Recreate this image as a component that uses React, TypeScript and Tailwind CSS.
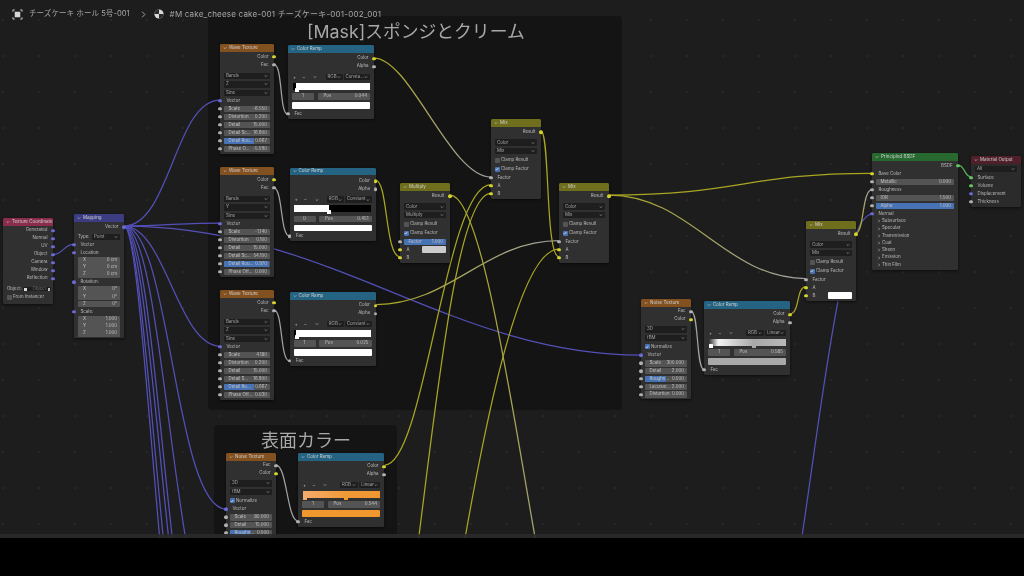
import type { ReactNode } from "react";
import clsx from "clsx";

const sockets = {
  y: "bg-[#d4d42c]",
  g: "bg-[#b0b0b0]",
  p: "bg-[#6a6ad4]",
  n: "bg-[#63c763]",
};
type Sock = keyof typeof sockets;

function Socket({ side, color }: { side: "l" | "r"; color: Sock }) {
  return (
    <span
      className={clsx(
        "absolute top-1/2 h-[3.4px] w-[3.4px] -translate-y-1/2 rounded-full",
        side === "l" ? "left-[-1.7px]" : "right-[-1.7px]",
        sockets[color],
      )}
    />
  );
}

function Chevron({ className = "" }: { className?: string }) {
  return (
    <svg viewBox="0 0 6 6" className={clsx("h-[4px] w-[4px] shrink-0", className)} fill="none" stroke="currentColor" strokeWidth="0.9">
      <path d="M1 2l2 2 2-2" />
    </svg>
  );
}

function Node({ className, head, title, children, body = "bg-[#303030]" }: { className: string; head: string; title: string; children: ReactNode; body?: string }) {
  return (
    <div className={clsx("absolute rounded-[1.5px] text-[4.4px] leading-none text-[#bdbdbd] shadow-[0_1px_3px_rgba(0,0,0,0.55)]", body, className)}>
      <div className={clsx("flex h-[7.5px] items-center gap-[2px] rounded-t-[1.5px] pl-[3px] text-[4.5px] text-[#d0d0d0]", head)}>
        <Chevron />
        <span>{title}</span>
      </div>
      {children}
    </div>
  );
}

function Out({ label, color }: { label: string; color: Sock }) {
  return (
    <div className="relative flex h-[8px] items-center justify-end pr-[5.5px]">
      <span>{label}</span>
      <Socket side="r" color={color} />
    </div>
  );
}

function In({ label, color, className = "" }: { label: string; color: Sock; className?: string }) {
  return (
    <div className={clsx("relative flex h-[8px] items-center pl-[6.5px]", className)}>
      <span>{label}</span>
      <Socket side="l" color={color} />
    </div>
  );
}

function Sel({ label, className = "" }: { label: string; className?: string }) {
  return (
    <div className={clsx("flex h-[6.5px] items-center justify-between rounded-[1px] bg-[#1e1e1e] px-[2px] text-[#a8a8a8]", className)}>
      <span>{label}</span>
      <Chevron />
    </div>
  );
}

function Num({ label, value, fill, sock = true, h = "h-[8px]", x = "px-[4px]" }: { label: string; value: string; fill?: number; sock?: boolean; h?: string; x?: string }) {
  return (
    <div className={clsx("relative flex items-center", h, x)}>
      <div className="relative flex h-[6.5px] flex-1 items-center justify-between overflow-hidden rounded-[1px] bg-[#545454] px-[3px] text-[#c4c4c4]">
        {fill ? <span className="absolute inset-y-0 left-0 bg-[#4772b3]" style={{ width: `${fill}%` }} /> : null}
        <span className="relative pl-[1.5px]">{label}</span>
        <span className="relative">{value}</span>
      </div>
      {sock ? <Socket side="l" color="g" /> : null}
    </div>
  );
}

function Check({ label, on, h = "h-[9px]" }: { label: string; on?: boolean; h?: string }) {
  return (
    <div className={clsx("flex items-center gap-[1.5px] pl-[3.5px]", h)}>
      <span className={clsx("flex h-[5px] w-[5px] items-center justify-center rounded-[1px]", on ? "bg-[#4772b3]" : "bg-[#545454]")}>
        {on ? (
          <svg viewBox="0 0 6 6" className="h-[4px] w-[4px]" fill="none" stroke="#fff" strokeWidth="1">
            <path d="M1 3.2l1.4 1.4L5 1.4" />
          </svg>
        ) : null}
      </span>
      <span>{label}</span>
    </div>
  );
}

function Wave({ className, mid, fields }: { className: string; mid: string; fields: [string, string, number?][] }) {
  return (
    <Node className={className} head="bg-[#83501f]" title="Wave Texture">
      <div className="pt-[1.4px]">
        <Out label="Color" color="y" />
        <Out label="Fac" color="g" />
      </div>
      <div className="mt-[3.8px] flex flex-col gap-[2px] px-[4px]">
        <Sel label="Bands" />
        <Sel label={mid} />
        <Sel label="Sine" />
      </div>
      <In label="Vector" color="p" className="mt-[0.8px]" />
      {fields.map(([label, value, fill]) => (
        <Num key={label} label={label} value={value} fill={fill} />
      ))}
      <div className="h-[1px]" />
    </Node>
  );
}

function Ramp({ className, mode, index, pos, swatch, children }: { className: string; mode: string; index: string; pos: string; swatch: string; children: ReactNode }) {
  return (
    <Node className={className} head="bg-[#246482]" title="Color Ramp">
      <div className="pt-[2.2px]">
        <Out label="Color" color="y" />
        <Out label="Alpha" color="g" />
      </div>
      <div className="mt-[3.2px] flex h-[6.5px] items-center gap-[1px] px-[4px]">
        <span className="flex w-[38px] items-center gap-[6px] pl-[1px] text-[5px] text-[#bdbdbd]">
          <span>+</span>
          <span>−</span>
          <Chevron className="ml-[1.5px]" />
        </span>
        <Sel label="RGB" className="ml-[3px] w-[20px]" />
        <Sel label={mode} className="flex-1" />
      </div>
      <div className="relative mx-[4.5px] mt-[2.6px] h-[6.7px]">{children}</div>
      <div className="mt-[3.7px] flex h-[6.5px] gap-[3.5px] px-[4px]">
        <div className="flex w-[22px] items-center justify-center rounded-[1px] bg-[#545454] text-[#c4c4c4]">{index}</div>
        <div className="flex flex-1 items-center justify-between rounded-[1px] bg-[#545454] px-[3px] text-[#c4c4c4]">
          <span className="pl-[3px]">Pos</span>
          <span>{pos}</span>
        </div>
      </div>
      <div className={clsx("mx-[4px] mt-[2.4px] h-[6.6px] rounded-[1px]", swatch)} />
      <In label="Fac" color="g" className="mt-[1px]" />
      <div className="h-[0.7px]" />
    </Node>
  );
}

function Handle({ className, tone = "bg-white" }: { className: string; tone?: string }) {
  return <span className={clsx("absolute bottom-[-2px] h-[4px] w-[4px] rounded-[0.5px]", tone, className)} />;
}

function Mix({ className, title, mode, a, b, factor }: { className: string; title: string; mode: string; a?: string; b?: string; factor?: boolean }) {
  const swatch = (tone?: string) =>
    tone ? <span className={clsx("absolute right-[4px] top-[0.7px] h-[6.4px] w-[24px] rounded-[1px]", tone)} /> : null;
  return (
    <Node className={className} head="bg-[#6e6e1d]" title={title}>
      <div className="pt-[1.8px]">
        <Out label="Result" color="y" />
      </div>
      <div className="mt-[3.2px] flex flex-col gap-[2px] px-[4px]">
        <Sel label="Color" />
        <Sel label={mode} />
      </div>
      <div className="mt-[1.3px]">
        <Check label="Clamp Result" />
        <Check label="Clamp Factor" on />
      </div>
      {factor ? <Num label="Factor" value="1.000" fill={100} /> : <In label="Factor" color="g" />}
      <div className="relative">
        <In label="A" color="y" />
        {swatch(a)}
      </div>
      <div className="relative">
        <In label="B" color="y" />
        {swatch(b)}
      </div>
      <div className="h-[1.2px]" />
    </Node>
  );
}

function Noise({ className, fields, cut }: { className: string; fields: [string, string, number?][]; cut?: boolean }) {
  return (
    <Node className={className} head="bg-[#83501f]" title="Noise Texture">
      <div className="pt-[1.2px]">
        <Out label="Fac" color="g" />
        <Out label="Color" color="y" />
      </div>
      <div className="mt-[2.4px] flex flex-col gap-[2.4px] px-[4px]">
        <Sel label="3D" />
        <Sel label="fBM" />
      </div>
      <Check label="Normalize" on h="h-[10.5px]" />
      <In label="Vector" color="p" className="-mt-[0.5px]" />
      {fields.map(([label, value, fill]) => (
        <Num key={label} label={label} value={value} fill={fill} h="h-[7.8px]" />
      ))}
      {cut ? <div className="h-[4px]" /> : <div className="h-[0.4px]" />}
    </Node>
  );
}

function SubPanel({ label }: { label: string }) {
  return (
    <div className="flex h-[7.25px] items-center gap-[1.5px] pl-[4.5px]">
      <Chevron className="-rotate-90" />
      <span>{label}</span>
    </div>
  );
}

function AxisGroup({ rows }: { rows: [string, string][] }) {
  return (
    <div className="mx-[4px] flex flex-col gap-[0.5px] overflow-hidden rounded-[1px]">
      {rows.map(([axis, value]) => (
        <div key={axis} className="flex h-[6.6px] items-center justify-between bg-[#545454] px-[3px] text-[#c4c4c4]">
          <span className="pl-[2px]">{axis}</span>
          <span>{value}</span>
        </div>
      ))}
    </div>
  );
}

const YEL = "#a9a622";
const PUR = "#5350b8";
const GRY = "#a2a2a2";
const GRN = "#58b058";

type Pt = [number, number];
const links: { id: string; pts: [Pt, Pt, Pt, Pt]; from: string; to?: string }[] = [
  // mapping fan
  { id: "m1", pts: [[124, 226], [170, 226], [175, 100], [220, 100]], from: PUR },
  { id: "m2", pts: [[124, 226], [160, 226], [185, 223], [220, 223]], from: PUR },
  { id: "m3", pts: [[124, 226], [165, 226], [178, 346], [220, 346]], from: PUR },
  { id: "m4", pts: [[124, 226], [170, 226], [175, 509], [226, 509]], from: PUR },
  { id: "m5", pts: [[124, 226], [165, 226], [175, 650], [225, 650]], from: PUR },
  { id: "m6", pts: [[124, 226], [160, 226], [170, 760], [225, 760]], from: PUR },
  { id: "m7", pts: [[124, 226], [155, 226], [175, 840], [230, 840]], from: PUR },
  { id: "m8", pts: [[124, 226], [150, 226], [170, 860], [225, 860]], from: PUR },
  { id: "m9", pts: [[124, 226], [148, 226], [165, 880], [225, 880]], from: PUR },
  { id: "m10", pts: [[124, 226], [330, 226], [450, 355], [641, 355]], from: PUR },
  { id: "t1", pts: [[53, 254.5], [64, 254.5], [63, 244.3], [74, 244.3]], from: PUR },
  { id: "n1", pts: [[760, 700], [800, 700], [825, 214], [872, 214]], from: PUR },
  // fac wires
  { id: "f1", pts: [[274, 64.5], [283, 64.5], [279, 114.3], [288, 114.3]], from: GRY },
  { id: "f2", pts: [[273.5, 187.5], [283, 187.5], [280, 236], [289.5, 236]], from: GRY },
  { id: "f3", pts: [[274, 310], [283, 310], [280, 361], [289.5, 361]], from: GRY },
  { id: "f4", pts: [[276, 465], [287, 465], [287, 521], [298, 521]], from: GRY },
  { id: "f5", pts: [[691, 311], [699, 311], [696, 369.5], [704, 369.5]], from: GRY },
  // colour wires
  { id: "c1", pts: [[374, 58], [410, 58], [450, 177], [491, 177]], from: YEL, to: GRY },
  { id: "c2", pts: [[375.5, 180], [388, 180], [385, 256.7], [400, 256.7]], from: YEL },
  { id: "c3", pts: [[376, 304.5], [450, 304.5], [485, 240.7], [559, 240.7]], from: YEL, to: GRY },
  { id: "c4", pts: [[384.7, 465], [425, 465], [445, 184.7], [491, 184.7]], from: YEL },
  { id: "c5", pts: [[370, 760], [415, 760], [435, 193.3], [491, 193.3]], from: YEL },
  { id: "c6", pts: [[420, 760], [440, 760], [490, 249], [559, 249]], from: YEL },
  { id: "c7", pts: [[450, 195], [500, 195], [545, 720], [585, 720]], from: YEL, to: GRY },
  { id: "c8", pts: [[541, 131.3], [550, 131.3], [545, 256.7], [559, 256.7]], from: YEL },
  { id: "c9", pts: [[609, 195], [740, 195], [745, 173.3], [872, 173.3]], from: YEL },
  { id: "c10", pts: [[609, 195], [690, 195], [725, 278.5], [806, 278.5]], from: YEL, to: GRY },
  { id: "c11", pts: [[790, 313.7], [800, 313.7], [796, 286.5], [806, 286.5]], from: YEL },
  { id: "c12", pts: [[856, 233], [864, 233], [862, 189.5], [872, 189.5]], from: YEL, to: GRY },
  { id: "c13", pts: [[958, 165], [965, 165], [964, 176.7], [971, 176.7]], from: GRN },
];

function Wires() {
  return (
    <svg className="absolute inset-0 h-[538px] w-[1024px]" viewBox="0 0 1024 538" fill="none">
      <defs>
        {links
          .filter((l) => l.to)
          .map((l) => (
            <linearGradient key={l.id} id={l.id} gradientUnits="userSpaceOnUse" x1={l.pts[0][0]} y1={l.pts[0][1]} x2={l.pts[3][0]} y2={l.pts[3][1]}>
              <stop offset="0" stopColor={l.from} />
              <stop offset="1" stopColor={l.to} />
            </linearGradient>
          ))}
      </defs>
      {links.map((l) => {
        const [a, b, c, d] = l.pts;
        return (
          <path
            key={l.id}
            d={`M${a[0]} ${a[1]}C${b[0]} ${b[1]} ${c[0]} ${c[1]} ${d[0]} ${d[1]}`}
            stroke={l.to ? `url(#${l.id})` : l.from}
            strokeWidth="1.25"
          />
        );
      })}
    </svg>
  );
}

function Breadcrumb() {
  return (
    <div className="absolute left-[12px] top-[8px] flex h-[12px] items-center text-[#a6a6a6]">
      <svg viewBox="0 0 12 12" className="h-[11px] w-[11px]" fill="none" stroke="#cfcfcf" strokeWidth="1">
        <path d="M1 3V1h2M9 1h2v2M11 9v2H9M3 11H1V9" />
        <rect x="3" y="3" width="6" height="6" fill="#d8d8d8" stroke="none" />
      </svg>
      <span className="ml-[6px] text-[7.6px]">チーズケーキ ホール 5号-001</span>
      <svg viewBox="0 0 6 10" className="ml-[11px] h-[7px] w-[5px]" fill="none" stroke="#bdbdbd" strokeWidth="1.2">
        <path d="M1 1l4 4-4 4" />
      </svg>
      <svg viewBox="0 0 10 10" className="ml-[8px] h-[10px] w-[10px]">
        <circle cx="5" cy="5" r="4.6" fill="#d8d8d8" />
        <path d="M5 .4A4.6 4.6 0 0 0 .4 5H5zM5 5v4.6A4.6 4.6 0 0 0 9.6 5z" fill="#2a2a2a" />
      </svg>
      <span className="ml-[6px] text-[8px] tracking-[0.2px]">#M cake_cheese cake-001 チーズケーキ-001-002_001</span>
    </div>
  );
}

export default function App() {
  return (
    <div className="flex h-[576px] w-[1024px] flex-col overflow-hidden bg-black font-['Inter','Noto_Sans_CJK_JP',sans-serif]">
      <div className="relative h-[538px] w-full shrink-0 overflow-hidden bg-[#1d1d1d] bg-[radial-gradient(circle,#2b2b2b_0.6px,transparent_1px)] bg-[size:36px_36px] bg-[position:-15px_2px] blur-[0.35px]">
        {/* frames */}
        <div className="absolute left-[208px] top-[16px] h-[394px] w-[414px] rounded-[4px] bg-[#141414]">
          <p className="mt-[7px] pl-[99px] text-[17.8px] leading-[18px] text-[#a8a8a8]">[Mask]スポンジとクリーム</p>
        </div>
        <div className="absolute left-[214px] top-[425px] h-[113px] w-[183px] rounded-t-[4px] bg-[#141414]">
          <p className="mt-[7px] pl-[47px] text-[18px] leading-[18px] text-[#a8a8a8]">表面カラー</p>
        </div>

        <Wires />
        <Breadcrumb />

        <Node className="left-[3px] top-[218px] w-[50px]" head="bg-[#8a2c4b]" title="Texture Coordinate">
          <div className="pt-[1px]">
            {["Generated", "Normal", "UV", "Object", "Camera", "Window", "Reflection"].map((s) => (
              <Out key={s} label={s} color="p" />
            ))}
          </div>
          <div className="mt-[3.5px] flex h-[6.5px] items-center gap-[1px] px-[3px]">
            <span className="w-[19px] pl-[1px]">Object:</span>
            <span className="flex flex-1 items-center gap-[2px] rounded-[1px] bg-[#1e1e1e] px-[1px] text-[#6c6c6c]">
              <span className="h-[3.5px] w-[3.5px] bg-[#d8d8d8]" />
              <span className="flex-1 pl-[3px]">Object</span>
              <span className="h-[3px] w-[2px] bg-[#bdbdbd]" />
            </span>
          </div>
          <Check label="From Instancer" />
          <div className="h-[2.5px]" />
        </Node>

        <Node className="left-[74px] top-[214px] w-[50px]" head="bg-[#3c3c83]" title="Mapping">
          <div className="pt-[1.8px]">
            <Out label="Vector" color="p" />
          </div>
          <div className="mt-[2.5px] flex h-[6.5px] items-center px-[4px]">
            <span className="w-[14px]">Type:</span>
            <Sel label="Point" className="flex-1" />
          </div>
          <In label="Vector" color="p" className="mt-[0.8px]" />
          <In label="Location:" color="p" />
          <AxisGroup rows={[["X", "0 cm"], ["Y", "0 cm"], ["Z", "0 cm"]]} />
          <In label="Rotation:" color="p" className="mt-[0.5px]" />
          <AxisGroup rows={[["X", "0°"], ["Y", "0°"], ["Z", "0°"]]} />
          <In label="Scale:" color="p" className="mt-[0.8px]" />
          <AxisGroup rows={[["X", "1.000"], ["Y", "1.000"], ["Z", "1.000"]]} />
          <div className="h-[1.5px]" />
        </Node>

        <Wave
          className="left-[220px] top-[44px] w-[54px]"
          mid="Z"
          fields={[["Scale", "-6.550"], ["Distortion", "0.200"], ["Detail", "15.000"], ["Detail Sc...", "16.900"], ["Detail Rou...", "0.667", 66], ["Phase O...", "-5.590"]]}
        />
        <Wave
          className="left-[220px] top-[167px] w-[54px]"
          mid="Y"
          fields={[["Scale", "-1.140"], ["Distortion", "0.100"], ["Detail", "15.000"], ["Detail Sc...", "54.100"], ["Detail Rou...", "0.970", 97], ["Phase Off...", "0.000"]]}
        />
        <Wave
          className="left-[220px] top-[290px] w-[54px]"
          mid="Z"
          fields={[["Scale", "4.180"], ["Distortion", "0.200"], ["Detail", "15.000"], ["Detail S...", "16.900"], ["Detail Ro...", "0.667", 66], ["Phase Off...", "0.030"]]}
        />

        <Ramp className="left-[288px] top-[45px] w-[86px]" mode="Consta..." index="1" pos="0.044" swatch="bg-white">
          <div className="h-full bg-white" />
          <span className="absolute left-0 top-0 h-full w-[3px] bg-black" />
          <Handle className="left-[2.5px]" />
        </Ramp>
        <Ramp className="left-[289.5px] top-[167.5px] w-[86px]" mode="Constant" index="0" pos="0.451" swatch="bg-white">
          <div className="flex h-full">
            <div className="w-[45%] bg-white" />
            <div className="flex-1 bg-black" />
          </div>
          <Handle className="left-[43%]" />
        </Ramp>
        <Ramp className="left-[289.5px] top-[292px] w-[86px]" mode="Constant" index="1" pos="0.025" swatch="bg-white">
          <div className="h-full bg-white" />
          <span className="absolute left-0 top-0 h-full w-[2px] bg-black" />
          <Handle className="left-[1px]" />
        </Ramp>
        <Ramp className="left-[704px] top-[301px] w-[86px]" mode="Linear" index="1" pos="0.585" swatch="bg-[#a9a9a9]">
          <div className="h-full bg-[linear-gradient(90deg,#333,#f2f2f2_12%,#a8a8a8_58%,#b8b8b8)]" />
          <Handle className="left-0" />
          <Handle className="left-[57%]" tone="bg-[#a8a8a8]" />
        </Ramp>
        <Ramp className="left-[298px] top-[453px] w-[86px]" mode="Linear" index="1" pos="0.544" swatch="bg-[#f0982e]">
          <div className="h-full bg-[linear-gradient(90deg,#f3ac6e,#f09a36_55%,#ef9630)]" />
          <Handle className="left-0" tone="bg-[#f3ac6e]" />
          <Handle className="left-[54%]" tone="bg-[#f09a36]" />
        </Ramp>

        <Mix className="left-[400px] top-[183px] w-[50px]" title="Multiply" mode="Multiply" a="bg-[#cccccc]" factor />
        <Mix className="left-[491px] top-[119px] w-[50px]" title="Mix" mode="Mix" />
        <Mix className="left-[559px] top-[183px] w-[50px]" title="Mix" mode="Mix" />
        <Mix className="left-[806px] top-[221px] w-[50px]" title="Mix" mode="Mix" b="bg-white" />

        <Noise
          className="left-[641px] top-[299px] w-[50px]"
          fields={[["Scale", "300.000"], ["Detail", "2.000"], ["Roughn...", "0.500", 50], ["Lacunar...", "2.000"], ["Distortion", "0.000"]]}
        />
        <Noise
          className="left-[226px] top-[453px] w-[50px]"
          cut
          fields={[["Scale", "80.000"], ["Detail", "15.000"], ["Roughn...", "0.500", 50]]}
        />

        <Node className="left-[872px] top-[153px] w-[86px]" head="bg-[#28692f]" title="Principled BSDF">
          <div className="pt-[1.5px]">
            <Out label="BSDF" color="n" />
          </div>
          <In label="Base Color" color="y" />
          <Num label="Metallic" value="0.000" />
          <In label="Roughness" color="g" />
          <Num label="IOR" value="1.500" />
          <Num label="Alpha" value="1.000" fill={100} />
          <In label="Normal" color="p" />
          <div className="-mt-[0.2px]">
            {["Subsurface", "Specular", "Transmission", "Coat", "Sheen", "Emission", "Thin Film"].map((s) => (
              <SubPanel key={s} label={s} />
            ))}
          </div>
          <div className="h-[1px]" />
        </Node>

        <Node className="left-[971px] top-[156px] w-[50px]" head="bg-[#4f2029]" title="Material Output" body="bg-[#2b2b2b]">
          <div className="px-[4px] pt-[2px]">
            <Sel label="All" />
          </div>
          <div className="mt-[2px]">
            <In label="Surface" color="n" />
            <In label="Volume" color="n" />
            <In label="Displacement" color="p" />
            <In label="Thickness" color="g" />
          </div>
          <div className="h-[1px]" />
        </Node>

        <div className="absolute inset-x-0 bottom-0 h-[4px] bg-[#2a2a2a]/90" />
      </div>
      <div className="flex-1 bg-black" />
    </div>
  );
}
